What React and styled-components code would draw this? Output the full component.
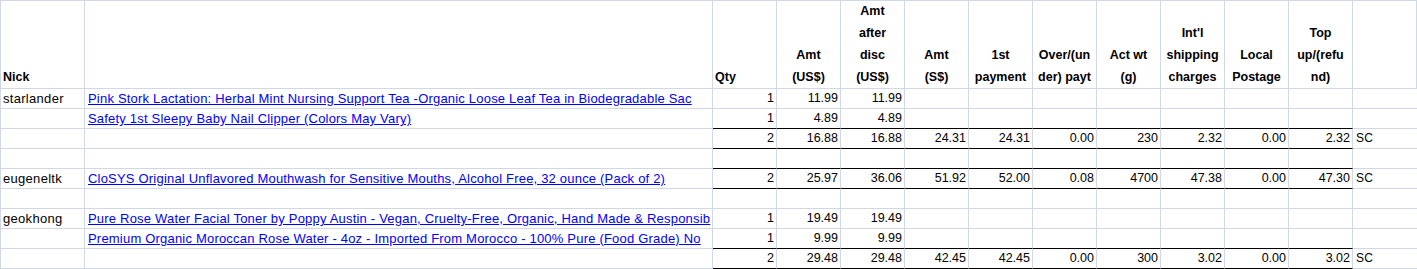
import * as React from "react"
import styled, { createGlobalStyle } from "styled-components"

const GRID = "#d0d7e5"

const GlobalStyle = createGlobalStyle`
  html, body {
    margin: 0;
    padding: 0;
    background: #ffffff;
  }
  body {
    font-family: "Liberation Sans", Arial, sans-serif;
  }
`

const Sheet = styled.div`
  display: grid;
  grid-template-columns: 84px 628px repeat(11, 64px);
  grid-template-rows: 88px;
  grid-auto-rows: 20px;
  width: 1417px;
  box-sizing: border-box;
  border-left: 1px solid ${GRID};
  border-top: 1px solid ${GRID};
  background: #ffffff;
`

const HeaderCell = styled.div`
  box-sizing: border-box;
  display: flex;
  flex-direction: column;
  justify-content: flex-end;
  align-items: ${({ $center }) => ($center ? "center" : "flex-start")};
  text-align: ${({ $center }) => ($center ? "center" : "left")};
  padding: 0 2px;
  border-right: 1px solid ${GRID};
  border-bottom: 1px solid ${GRID};
  font-size: 12.5px;
  font-weight: bold;
  line-height: 22px;
  color: #000;
  white-space: nowrap;
  overflow: hidden;
`

const Cell = styled.div`
  box-sizing: border-box;
  padding: 0 ${({ $num }) => ($num ? "2px" : "0")} 0 ${({ $indent }) => ($indent ? "3px" : "2px")};
  border-right: 1px solid ${GRID};
  border-bottom: 1px solid ${({ $rule }) => ($rule ? "#000000" : GRID)};
  font-family: "Liberation Sans", Arial, sans-serif;
  font-size: ${({ $num }) => ($num ? "12.5px" : "13px")};
  letter-spacing: ${({ $num }) => ($num ? "0" : "0.3px")};
  line-height: 19px;
  text-align: ${({ $num }) => ($num ? "right" : "left")};
  white-space: nowrap;
  overflow: hidden;
  color: #000;
`

const Note = styled(Cell)`
  border-right: none;
  overflow: visible;
  font-size: 12px;
  padding-left: 3px;
`

const Link = styled.a`
  color: #0000ff;
  text-decoration: underline;
  letter-spacing: 0.2px;
`

const headers = [
  { lines: ["Nick"] },
  { lines: [] },
  { lines: ["Qty"] },
  { lines: ["Amt", "(US$)"], center: true },
  { lines: ["Amt", "after", "disc", "(US$)"], center: true },
  { lines: ["Amt", "(S$)"], center: true },
  { lines: ["1st", "payment"], center: true },
  { lines: ["Over/(un", "der) payt"], center: true },
  { lines: ["Act wt", "(g)"], center: true },
  { lines: ["Int'l", "shipping", "charges"], center: true },
  { lines: ["Local", "Postage"], center: true },
  { lines: ["Top", "up/(refu", "nd)"], center: true },
  { lines: [] },
]

// item names are kept as far as the sheet shows them before the Qty column
const rows = [
  {
    nick: "starlander",
    item: "Pink Stork Lactation: Herbal Mint Nursing Support Tea -Organic Loose Leaf Tea in Biodegradable Sac",
    nums: ["1", "11.99", "11.99"],
  },
  {
    item: "Safety 1st Sleepy Baby Nail Clipper (Colors May Vary)",
    nums: ["1", "4.89", "4.89"],
  },
  {
    boxed: true,
    nums: ["2", "16.88", "16.88", "24.31", "24.31", "0.00", "230", "2.32", "0.00", "2.32"],
    note: "SC",
  },
  {},
  {
    boxed: true,
    nick: "eugeneltk",
    item: "CloSYS Original Unflavored Mouthwash for Sensitive Mouths, Alcohol Free, 32 ounce (Pack of 2)",
    nums: ["2", "25.97", "36.06", "51.92", "52.00", "0.08", "4700", "47.38", "0.00", "47.30"],
    note: "SC",
  },
  {},
  {
    nick: "geokhong",
    item: "Pure Rose Water Facial Toner by Poppy Austin - Vegan, Cruelty-Free, Organic, Hand Made & Responsib",
    nums: ["1", "19.49", "19.49"],
  },
  {
    item: "Premium Organic Moroccan Rose Water - 4oz - Imported From Morocco - 100% Pure (Food Grade) No",
    nums: ["1", "9.99", "9.99"],
  },
  {
    boxed: true,
    nums: ["2", "29.48", "29.48", "42.45", "42.45", "0.00", "300", "3.02", "0.00", "3.02"],
    note: "SC",
  },
]

const NUM_COLS = 10

const App = () => (
  <>
    <GlobalStyle />
    <Sheet>
      {headers.map((h, i) => (
        <HeaderCell key={`h${i}`} $center={h.center}>
          {h.lines.map(line => (
            <span key={line}>{line}</span>
          ))}
        </HeaderCell>
      ))}
      {rows.map((row, r) => {
        const next = rows[r + 1] || {}
        const rule = row.boxed || next.boxed
        return (
          <React.Fragment key={`r${r}`}>
            <Cell>{row.nick}</Cell>
            <Cell $indent>{row.item && <Link href="#">{row.item}</Link>}</Cell>
            {Array.from({ length: NUM_COLS }, (_, c) => (
              <Cell key={c} $num $rule={rule}>
                {row.nums && row.nums[c]}
              </Cell>
            ))}
            <Note>{row.note}</Note>
          </React.Fragment>
        )
      })}
    </Sheet>
  </>
)

export default App
